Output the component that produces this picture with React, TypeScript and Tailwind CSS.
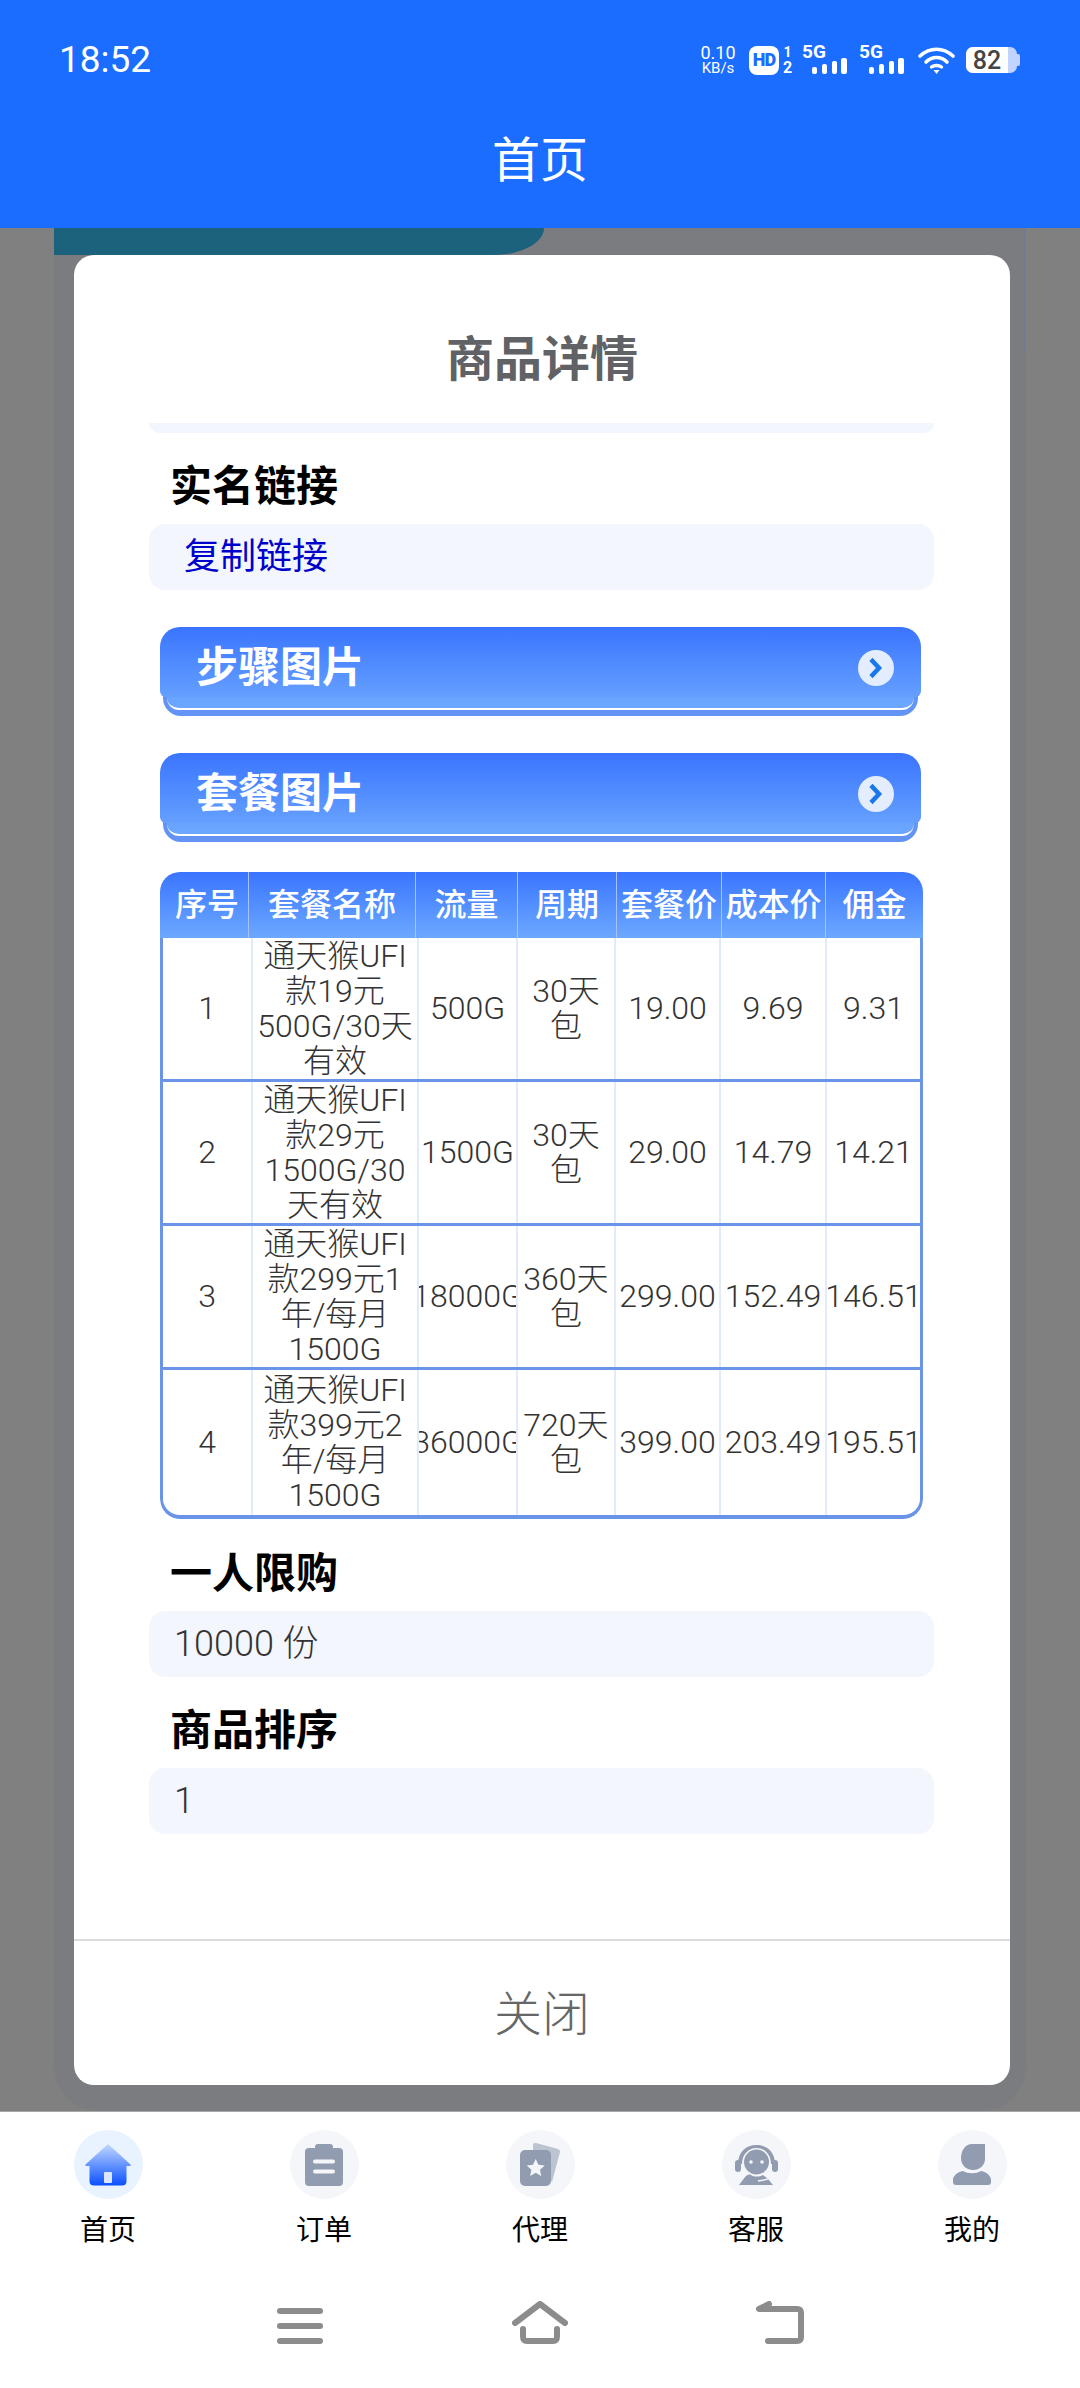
const FONT = { fontFamily: '"Roboto", "Noto Sans CJK SC", sans-serif' };

const headers = [
  ["序号", "w-[89px] pl-[6px]"],
  ["套餐名称", "w-[167px]"],
  ["流量", "w-[102px]"],
  ["周期", "w-[99px]"],
  ["套餐价", "w-[105px]"],
  ["成本价", "w-[104px]"],
  ["佣金", "flex-1"],
];

const rows = [
  ["1", "通天猴UFI款19元500G/30天有效", "500G", "30天包", "19.00", "9.69", "9.31"],
  ["2", "通天猴UFI款29元1500G/30天有效", "1500G", "30天包", "29.00", "14.79", "14.21"],
  ["3", "通天猴UFI款299元1年/每月1500G", "18000G", "360天包", "299.00", "152.49", "146.51"],
  ["4", "通天猴UFI款399元2年/每月1500G", "36000G", "720天包", "399.00", "203.49", "195.51"],
];

const cellWidths = ["w-[90px]", "w-[166px]", "w-[99px]", "w-[98px]", "w-[105px]", "w-[106px]", "flex-1"];

function Signal() {
  return (
    <div className="relative w-[46px] h-[30px]">
      <span className="absolute left-0 -top-[3px] text-[19px] leading-[20px] font-bold text-white">5G</span>
      <svg className="absolute left-[10px] top-[13px]" width="36" height="16" viewBox="0 0 36 16" fill="#fff">
        <rect x="0" y="9" width="5" height="7" rx="2" />
        <rect x="10" y="6" width="5" height="10" rx="2" />
        <rect x="20" y="3" width="5" height="13" rx="2" />
        <rect x="29" y="0" width="6" height="16" rx="2" />
      </svg>
    </div>
  );
}

function StatusBar() {
  return (
    <div className="h-[120px] flex items-center justify-between pl-[59px] pr-[60px] text-white">
      <span className="text-[37px] leading-[40px]">18:52</span>
      <div className="flex items-center">
        <div className="w-[38px] flex flex-col items-center mr-[12px]">
          <span className="text-[18px] leading-[17px]">0.10</span>
          <span className="text-[15px] leading-[15px]">KB/s</span>
        </div>
        <div className="w-[30px] h-[29px] bg-white rounded-[8px] flex items-center justify-center">
          <span className="text-[18px] leading-[18px] font-black tracking-[-1px] text-[#1a6dff]">HD</span>
        </div>
        <div className="w-[13px] ml-[2px] mr-[8px] flex flex-col items-center font-bold">
          <span className="text-[14px] leading-[15px]">1</span>
          <span className="text-[16px] leading-[15px]">2</span>
        </div>
        <Signal />
        <div className="w-[11px]" />
        <Signal />
        <svg className="ml-[13px] mr-[11px]" width="37" height="27" viewBox="0 0 37 27" fill="none" stroke="#fff" strokeLinecap="round">
          <path d="M2 9C12 0 25 0 35 9" strokeWidth="3.6" />
          <path d="M8 15C14 9 23 9 29 15" strokeWidth="3.6" />
          <path d="M13.500 20C16 18 21 18 23.500 20" strokeWidth="3.4" />
          <path d="M15.500 23H21.500L18.500 27Z" fill="#fff" stroke="none" />
        </svg>
        <div className="relative w-[51px] h-[26px] rounded-[7px] bg-[#c0d4ff] overflow-hidden">
          <div className="w-[42px] h-full bg-white flex items-center justify-center">
            <span className="text-[25px] leading-[25px] font-medium text-[#444]">82</span>
          </div>
        </div>
        <div className="w-[3px] h-[12px] rounded-r-[2px] bg-[#c0d4ff]" />
      </div>
    </div>
  );
}

function Chevron() {
  return (
    <div className="w-[36px] h-[36px] rounded-full bg-[#e4edfd] flex items-center justify-center">
      <svg width="14" height="22" viewBox="0 0 14 22" fill="none" stroke="#1a78ea" strokeWidth="4.5" strokeLinecap="square" strokeLinejoin="miter">
        <path d="M3.500 4L10 11L3.500 18" />
      </svg>
    </div>
  );
}

// the button is three stacked layers: blue base, narrow lower lip, full width top
function LinkButton({ title, className }: { title: string; className: string }) {
  return (
    <div className={`${className} relative h-[89px] w-[761px] ml-[11px]`}>
      <div className="absolute inset-x-[3px] top-[40px] bottom-0 rounded-b-[18px] bg-[#6394f5]" />
      <div className="absolute inset-x-[7px] top-[50px] h-[33px] rounded-b-[12px] bg-linear-to-b from-[#659fff] to-[#6ba6ff] border-b-[2px] border-white" />
      <div className="absolute inset-x-0 top-0 h-[70px] rounded-t-[20px] rounded-b-[6px] bg-linear-to-b from-[#3a74ff] to-[#659fff]" />
      <div className="absolute inset-x-0 top-0 h-[81px] flex items-center justify-between pl-[36px] pr-[27px]">
        <span className="text-[42px] leading-[48px] font-bold text-white">{title}</span>
        <Chevron />
      </div>
    </div>
  );
}

function Field({ label, value }: { label: string; value: string }) {
  return (
    <div>
      <div className="h-[76px] pl-[21px] flex items-center text-[42px] font-bold text-black">{label}</div>
      <div className="h-[66px] rounded-[16px] bg-[#f3f6fd] pl-[25px] flex items-center text-[36px] font-light text-[#333]">{value}</div>
    </div>
  );
}

function PlanTable() {
  return (
    <div className="mt-[30px] ml-[11px] w-[763px] rounded-[20px] overflow-hidden bg-white">
      <div className="h-[66px] flex bg-linear-to-b from-[#3a74ff] to-[#6da8ff] text-white text-[32px] font-medium">
        {headers.map(([text, width], i) => (
          <div key={text} className={`${width} flex items-center justify-center whitespace-nowrap ${i < 6 ? "border-r-[1px] border-[#a4c3ff]" : ""}`}>
            {text}
          </div>
        ))}
      </div>
      <div className="border-x-[3px] border-b-[4px] border-[#6a94e8] rounded-b-[20px]">
        {rows.map((row, r) => (
          <div key={row[0]} className={`flex text-[32px] leading-[35px] font-light text-[#333] ${r < 3 ? "h-[144px] border-b-[3px] border-[#6a94e8]" : "h-[145px]"}`}>
            {row.map((cell, c) => (
              <div
                key={c}
                className={`${cellWidths[c]} flex items-center justify-center overflow-hidden text-center ${c < 6 ? "border-r-[2px] border-[#e3ebfa]" : ""}`}
              >
                <span className={c === 1 || c === 3 ? "block w-full px-[2px]" : "shrink-0 whitespace-nowrap"}>{cell}</span>
              </div>
            ))}
          </div>
        ))}
      </div>
    </div>
  );
}

function NavIcon({ name }: { name: string }) {
  if (name === "首页") {
    return (
      <svg width="46" height="42" viewBox="0 0 46 42">
        <defs>
          <linearGradient id="homeGrad" x1="0" y1="0" x2="0" y2="1">
            <stop offset="0" stopColor="#c2d9ff" />
            <stop offset="1" stopColor="#0b50ff" />
          </linearGradient>
        </defs>
        <path d="M23 0L45.500 20.500V22H41.500V37C41.500 40 40 41.500 37 41.500H9C6 41.500 4.500 40 4.500 37V22H.5V20.500Z" fill="url(#homeGrad)" />
        <rect x="19" y="28" width="8" height="11" rx="1" fill="#dbe7ff" />
      </svg>
    );
  }
  if (name === "订单") {
    return (
      <svg width="38" height="42" viewBox="0 0 38 42" fill="#929cb1">
        <rect x="10" y="0" width="18" height="8" rx="3" />
        <rect x="0" y="4" width="38" height="38" rx="4" />
        <rect x="8" y="15.500" width="22" height="4" rx="2" fill="#f5f6fa" />
        <rect x="8" y="25.500" width="22" height="4" rx="2" fill="#f5f6fa" />
      </svg>
    );
  }
  if (name === "代理") {
    return (
      <svg width="40" height="43" viewBox="0 0 40 43">
        <path d="M13 1C14 0 15 0 16 0L38 6C40 7 40 8 40 9L32 39L13 8Z" fill="#bcc3d1" />
        <rect x="0" y="7" width="31" height="36" rx="5" fill="#929cb1" />
        <path d="M15.700 16L18.400 21.800L24.700 22.500L20 26.800L21.300 33L15.700 29.800L10.100 33L11.400 26.800L6.700 22.500L13 21.800Z" fill="#f5f6fa" />
      </svg>
    );
  }
  if (name === "客服") {
    return (
      <svg width="43" height="40" viewBox="0 0 43 40" fill="#929cb1">
        <rect x="0" y="15" width="6" height="12" rx="3" />
        <rect x="37" y="15" width="6" height="12" rx="3" />
        <path d="M3 19C3 7 11 0 21.500 0C32 0 40 7 40 19H36C36 10 30 3 21.500 3C13 3 7 10 7 19Z" />
        <circle cx="21.500" cy="17" r="12.500" />
        <circle cx="16" cy="17" r="1.800" fill="#f5f6fa" />
        <circle cx="27" cy="17" r="1.800" fill="#f5f6fa" />
        <path d="M4 40L10 32C12 30 14 29 16 30C19 32 24 32 28 30L33 34L38 40Z" />
        <path d="M39.500 27C39 32 33 35 23 36" fill="none" stroke="#f5f6fa" strokeWidth="1.500" />
      </svg>
    );
  }
  return (
    <svg width="38" height="41" viewBox="0 0 38 41" fill="#929cb1">
      <path d="M19 0H32V15C32 21 27 26 20 26C13 26 8 21 8 14C8 7 12 0 19 0Z" />
      <path d="M0 36C0 32 4 28 10 27C15 30 23 30 28 27C34 28 38 32 38 36V38C38 40 37 41 35 41H3C1 41 0 40 0 38Z" />
    </svg>
  );
}

function BottomNav() {
  return (
    <div className="h-[277px] shrink-0 bg-white border-t-[1px] border-[#a8a8a8]">
      <div className="flex pt-[18px]">
        {["首页", "订单", "代理", "客服", "我的"].map((name, i) => (
          <div key={name} className="w-[216px] flex flex-col items-center">
            <div className={`w-[69px] h-[69px] rounded-full flex items-center justify-center ${i === 0 ? "bg-[#e9f3ff]" : "bg-[#f5f6fa]"}`}>
              <NavIcon name={name} />
            </div>
            <span className="mt-[12px] text-[28px] leading-[40px] text-black">{name}</span>
          </div>
        ))}
      </div>
      <div className="mt-[50px] flex items-end justify-center">
        <svg width="46" height="36" viewBox="0 0 46 36" fill="#8c8c8c">
          <rect y="0" width="46" height="6" rx="3" />
          <rect y="15" width="46" height="6" rx="3" />
          <rect y="30" width="46" height="6" rx="3" />
        </svg>
        <svg className="ml-[189px]" width="56" height="43" viewBox="0 0 56 43" fill="none" stroke="#8c8c8c" strokeWidth="6" strokeLinecap="round" strokeLinejoin="round">
          <path d="M3 22L28 3L53 22" />
          <path d="M11 28V35C11 38.500 12 40 15 40H41C44 40 45 38.500 45 35V28" />
        </svg>
        <svg className="ml-[188px]" width="48" height="43" viewBox="0 0 48 43" fill="none" stroke="#8c8c8c" strokeWidth="6" strokeLinecap="round" strokeLinejoin="round">
          <path d="M13 3L3 8H41C44 8 45 9 45 12V36C45 39 44 40 41 40H12" />
        </svg>
      </div>
    </div>
  );
}

export default function App() {
  return (
    <div style={FONT} className="w-[1080px] h-[2388px] overflow-hidden flex flex-col bg-[#808080]">
      <div className="h-[228px] shrink-0 bg-[#1a6dff]">
        <StatusBar />
        <div className="text-center text-[48px] leading-[60px] mt-[11px] text-white">首页</div>
      </div>

      <div className="flex-1 min-h-0 mx-[54px] relative rounded-b-[44px] bg-[#7a7c80] pl-[20px] pt-[27px]">
        <div className="absolute left-0 top-0 w-[490px] h-[27px] rounded-br-[50px_27px] bg-[#1c627d]" />
        <div className="absolute right-[1px] top-0 w-[1px] h-[122px] bg-[#6d7a90]" />

        <div className="relative w-[936px] h-[1830px] rounded-[20px] bg-white flex flex-col overflow-hidden">
          <div className="h-[168px] shrink-0 pt-[42px] flex items-center justify-center text-[48px] font-bold text-[#606266]">商品详情</div>

          <div className="flex-1 pl-[75px] pr-[76px]">
            <div className="h-[10px] rounded-b-[16px] bg-[#f3f6fd]" />
            <div className="mt-[15px]">
              <div className="h-[76px] pl-[21px] flex items-center text-[42px] font-bold text-black">实名链接</div>
              <div className="h-[66px] rounded-[16px] bg-[#f3f6fd] pl-[35px] flex items-center text-[36px] text-[#0000cc]">复制链接</div>
            </div>
            <LinkButton title="步骤图片" className="mt-[37px]" />
            <LinkButton title="套餐图片" className="mt-[37px]" />
            <PlanTable />
            <div className="mt-[16px]">
              <Field label="一人限购" value="10000 份" />
            </div>
            <div className="mt-[15px]">
              <Field label="商品排序" value="1" />
            </div>
          </div>

          <div className="h-[146px] shrink-0 pt-[4px] border-t-[2px] border-[#dcdcdc] flex items-center justify-center text-[48px] font-light text-[#666]">关闭</div>
        </div>
      </div>

      <BottomNav />
    </div>
  );
}
